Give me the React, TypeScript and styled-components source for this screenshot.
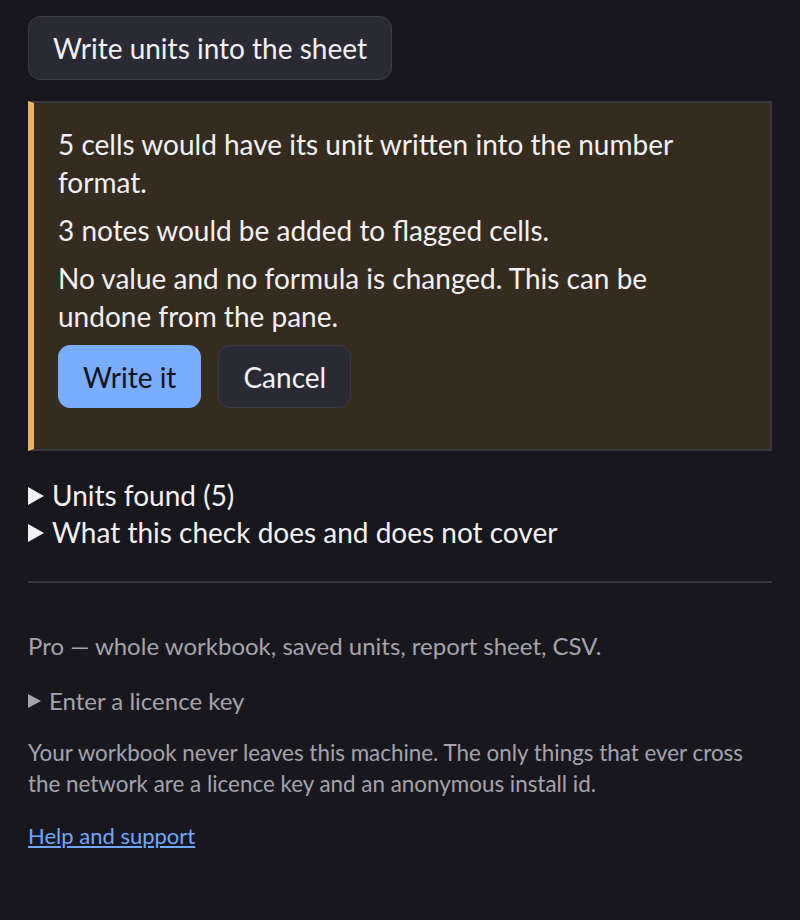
import React from 'react';
import styled, { createGlobalStyle } from 'styled-components';

const GlobalStyle = createGlobalStyle`
  html, body {
    margin: 0;
    background: #18171e;
  }
  body {
    font-family: Lato, "Noto Sans", "Liberation Sans", sans-serif;
    color: #f1f1f6;
  }
`;

const Page = styled.div`
  padding: 16px 28px 40px;
`;

const Button = styled.button<{ $primary?: boolean }>`
  display: inline-flex;
  align-items: center;
  height: 63px;
  padding: 0 24px;
  font-family: inherit;
  font-size: 28px;
  border-radius: 12px;
  cursor: pointer;
  background: ${(p) => (p.$primary ? '#79adff' : '#2a2a35')};
  color: ${(p) => (p.$primary ? '#12121a' : '#f1f1f6')};
  border: 1px solid ${(p) => (p.$primary ? '#79adff' : '#3a3a46')};
`;

const MainButton = styled(Button)`
  height: 64px;
`;

const Notice = styled.div`
  margin-top: 21px;
  background: #352c1f;
  border: 2px solid #3a3a45;
  border-left: 6px solid #e8b45c;
  padding: 22px 24px 41px;
`;

const NoticeText = styled.p`
  margin: 0 0 10px;
  font-size: 28px;
  line-height: 38px;
`;

const ButtonRow = styled.div`
  display: flex;
  gap: 17px;
`;

const Disclosures = styled.div`
  margin-top: 26px;
`;

const Summary = styled.summary<{ $size: number; $gap: number }>`
  display: flex;
  align-items: center;
  gap: ${(p) => p.$gap}px;
  list-style: none;
  cursor: pointer;

  &::-webkit-details-marker {
    display: none;
  }

  &::before {
    content: '';
    flex: none;
    width: 0;
    height: 0;
    border-left: ${(p) => p.$size}px solid currentColor;
    border-top: ${(p) => p.$size * 0.58}px solid transparent;
    border-bottom: ${(p) => p.$size * 0.58}px solid transparent;
  }
`;

const Disclosure = styled.details`
  font-size: 28px;
  line-height: 37px;
`;

const Divider = styled.hr`
  border: none;
  height: 2px;
  background: #38373f;
  margin: 30px 0 0;
`;

const Footer = styled.div`
  display: flex;
  flex-direction: column;
  gap: 21px;
  padding-top: 47px;
  color: #a4a4ae;
  font-size: 24px;
  line-height: 31px;
`;

const Muted = styled.p`
  margin: 0;
`;

const Small = styled.p`
  margin: 0;
  font-size: 22.4px;
`;

const LicenceDetails = styled.details`
  margin-top: 3px;
`;

const HelpLink = styled.a`
  color: #6ea9ff;
  font-size: 22px;
  text-decoration: underline;
  align-self: flex-start;
`;

export default function App() {
  return (
    <Page>
      <GlobalStyle />
      <MainButton>Write units into the sheet</MainButton>
      <Notice>
        <NoticeText>5 cells would have its unit written into the number format.</NoticeText>
        <NoticeText>3 notes would be added to flagged cells.</NoticeText>
        <NoticeText>No value and no formula is changed. This can be undone from the pane.</NoticeText>
        <ButtonRow>
          <Button $primary>Write it</Button>
          <Button>Cancel</Button>
        </ButtonRow>
      </Notice>
      <Disclosures>
        <Disclosure>
          <Summary $size={16} $gap={8}>Units found (5)</Summary>
        </Disclosure>
        <Disclosure>
          <Summary $size={16} $gap={8}>What this check does and does not cover</Summary>
        </Disclosure>
      </Disclosures>
      <Divider />
      <Footer>
        <Muted>Pro — whole workbook, saved units, report sheet, CSV.</Muted>
        <LicenceDetails>
          <Summary $size={13} $gap={8}>Enter a licence key</Summary>
        </LicenceDetails>
        <Small>
          Your workbook never leaves this machine. The only things that ever cross the network are a
          licence key and an anonymous install id.
        </Small>
        <HelpLink href="#">Help and support</HelpLink>
      </Footer>
    </Page>
  );
}
